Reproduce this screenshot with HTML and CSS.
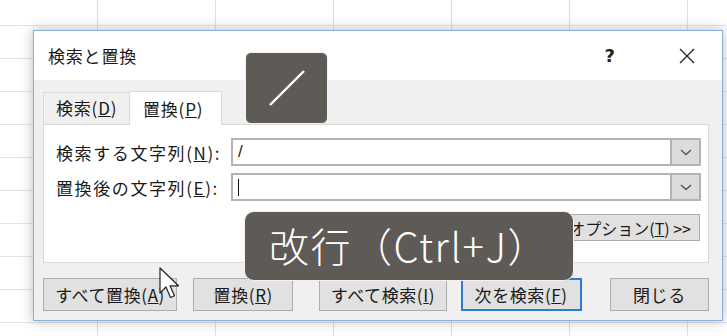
FILE: index.html
```html
<!DOCTYPE html>
<html lang="ja">
<head>
    <meta charset="UTF-8">
    <title>検索と置換</title>
    <link rel="stylesheet" href="styles.css">
</head>
<body>
    <div class="sheet">
        <div class="dialog">
            <div class="titlebar">
                <span class="title">検索と置換</span>
                <span class="help">?</span>
                <svg class="close" width="16" height="16" viewBox="0 0 16 16">
                    <path d="M1 1 L15 15 M15 1 L1 15" stroke="#222" stroke-width="1.3" fill="none"/>
                </svg>
            </div>
            <div class="dlg-body">
                <div class="tabs">
                    <div class="tab">検索(<u>D</u>)</div>
                    <div class="tab active">置換(<u>P</u>)</div>
                </div>
                <div class="panel">
                    <div class="field-row">
                        <span class="label">検索する文字列(<u>N</u>):</span>
                        <div class="combo">
                            <div class="combo-text">/</div>
                            <div class="combo-btn">
                                <svg width="12" height="7" viewBox="0 0 12 7"><path d="M1 1 L6 5.5 L11 1" stroke="#555" stroke-width="1.4" fill="none"/></svg>
                            </div>
                        </div>
                    </div>
                    <div class="field-row">
                        <span class="label">置換後の文字列(<u>E</u>):</span>
                        <div class="combo">
                            <div class="combo-text"><span class="caret"></span></div>
                            <div class="combo-btn">
                                <svg width="12" height="7" viewBox="0 0 12 7"><path d="M1 1 L6 5.5 L11 1" stroke="#555" stroke-width="1.4" fill="none"/></svg>
                            </div>
                        </div>
                    </div>
                    <div class="options-row">
                        <button class="btn btn-options">オプション(<u>T</u>) &gt;&gt;</button>
                    </div>
                </div>
                <div class="button-row">
                    <button class="btn btn-replace-all">すべて置換(<u>A</u>)</button>
                    <button class="btn btn-replace">置換(<u>R</u>)</button>
                    <button class="btn btn-find-all">すべて検索(<u>I</u>)</button>
                    <button class="btn btn-find-next">次を検索(<u>F</u>)</button>
                    <button class="btn btn-close">閉じる</button>
                </div>
            </div>
        </div>

        <!-- テロップ -->
        <div class="caption caption-slash">
            <svg width="40" height="40" viewBox="0 0 40 40"><path d="M3 37 L37 3" stroke="#fff" stroke-width="2.4" fill="none"/></svg>
        </div>
        <div class="caption caption-newline">改行（Ctrl+J）</div>

        <svg class="cursor" width="22" height="34" viewBox="0 0 22 34">
            <path d="M1 1 L1 26 L7 20 L11.5 30.5 L15.5 28.8 L11 18.8 L19.5 18.8 Z" fill="#fff" stroke="#222" stroke-width="1.2" stroke-linejoin="round"/>
        </svg>
    </div>
</body>
</html>
```

FILE: styles.css
```css
/* 全体 */
body {
    margin: 0;
    font-family: "Noto Sans CJK JP", "Noto Sans", sans-serif;
    color: #1a1a1a;
    overflow: hidden;
}

/* Excelのシート背景 */
.sheet {
    position: relative;
    width: 727px;
    height: 336px;
    padding: 30px 0 0 33px;
    box-sizing: border-box;
    background-color: #fff;
    background-image:
        linear-gradient(to right, #dedede 1px, transparent 1px),
        linear-gradient(to bottom, #e4e4e4 1px, transparent 1px);
    background-size: 118px 33px;
    background-position: 97px 25px;
}

/* ダイアログ */
.dialog {
    width: 690px;
    height: 291px;
    box-sizing: border-box;
    border: 1px solid #86b1dc;
    background: #f0f0f0;
    box-shadow: 0 0 12px rgba(0, 0, 0, 0.28);
    display: flex;
    flex-direction: column;
}

.titlebar {
    height: 49px;
    background: #fff;
    display: flex;
    align-items: center;
    padding: 0 0 0 14px;
    flex-shrink: 0;
}

.title {
    font-size: 17px;
    flex: 1;
    letter-spacing: 0.8px;
}

.help {
    font-family: "DejaVu Sans", sans-serif;
    font-size: 18px;
    font-weight: bold;
    margin-right: 64px;
    color: #222;
}

.close {
    margin-right: 27px;
}

.dlg-body {
    flex: 1;
    padding: 10px 13px 0 9px;
}

/* タブ */
.tabs {
    display: flex;
    align-items: flex-end;
    height: 34px;
}

.tab {
    font-size: 17px;
    letter-spacing: 0.8px;
    height: 32px;
    width: 87px;
    box-sizing: border-box;
    padding-left: 12px;
    line-height: 30px;
    border: 1px solid #d9d9d9;
    border-bottom: none;
    background: #f0f0f0;
}

.tab.active {
    height: 34px;
    width: 92px;
    padding-left: 13px;
    line-height: 34px;
    background: #fff;
    border-left: none;
    margin-bottom: -1px;
    position: relative;
}

.panel {
    height: 139px;
    box-sizing: border-box;
    border: 1px solid #d9d9d9;
    background: #fff;
    padding: 13px 7px 0 12px;
}

.field-row {
    display: flex;
    align-items: center;
    height: 28px;
    margin-bottom: 7px;
}

.label {
    width: 175px;
    font-size: 17px;
    letter-spacing: 1.6px;
    white-space: nowrap;
}

.combo {
    display: flex;
    width: 470px;
    height: 28px;
    box-sizing: border-box;
    border: 2px solid #b3b3b3;
}

.combo-text {
    flex: 1;
    font-size: 17px;
    line-height: 24px;
    padding-left: 5px;
    font-family: "Liberation Sans", sans-serif;
}

.caret {
    display: inline-block;
    width: 1px;
    height: 17px;
    background: #111;
    vertical-align: middle;
}

.combo-btn {
    width: 27px;
    background: #dcdcdc;
    border-left: 2px solid #b3b3b3;
    display: flex;
    align-items: center;
    justify-content: center;
}

.options-row {
    display: flex;
    justify-content: flex-end;
    padding-right: 1px;
    margin-top: 13px;
}

/* ボタン */
.btn {
    font-family: inherit;
    font-size: 17px;
    letter-spacing: 0.6px;
    color: #1a1a1a;
    background: #e1e1e1;
    border: 1px solid #adadad;
    padding: 0;
    height: 33px;
}

.btn-options {
    width: 142px;
    height: 27px;
    font-size: 16px;
    letter-spacing: 0;
    text-align: right;
    padding-right: 8px;
}

.button-row {
    display: flex;
    margin-top: 15px;
}

.btn-replace-all { width: 135px; }
.btn-replace { width: 101px; margin-left: 16px; }
.btn-find-all { width: 128px; margin-left: 26px; }
.btn-find-next { width: 122px; margin-left: 14px; border: 2px solid #2d7ad2; }
.btn-close { width: 100px; margin-left: 28px; }

/* テロップ */
.caption {
    position: absolute;
    background: #5e5a56;
    border: 1px solid #f4f2ee;
    box-sizing: border-box;
    color: #fff;
    display: flex;
    align-items: center;
    justify-content: center;
}

.caption-slash {
    left: 245px;
    top: 52px;
    width: 83px;
    height: 72px;
    border-radius: 6px;
}

.caption-newline {
    left: 244px;
    top: 211px;
    width: 330px;
    height: 70px;
    border-radius: 10px;
    font-size: 40px;
    font-weight: 300;
    letter-spacing: 1.5px;
    padding-bottom: 2px;
}

.cursor {
    position: absolute;
    left: 159px;
    top: 267px;
}
```
